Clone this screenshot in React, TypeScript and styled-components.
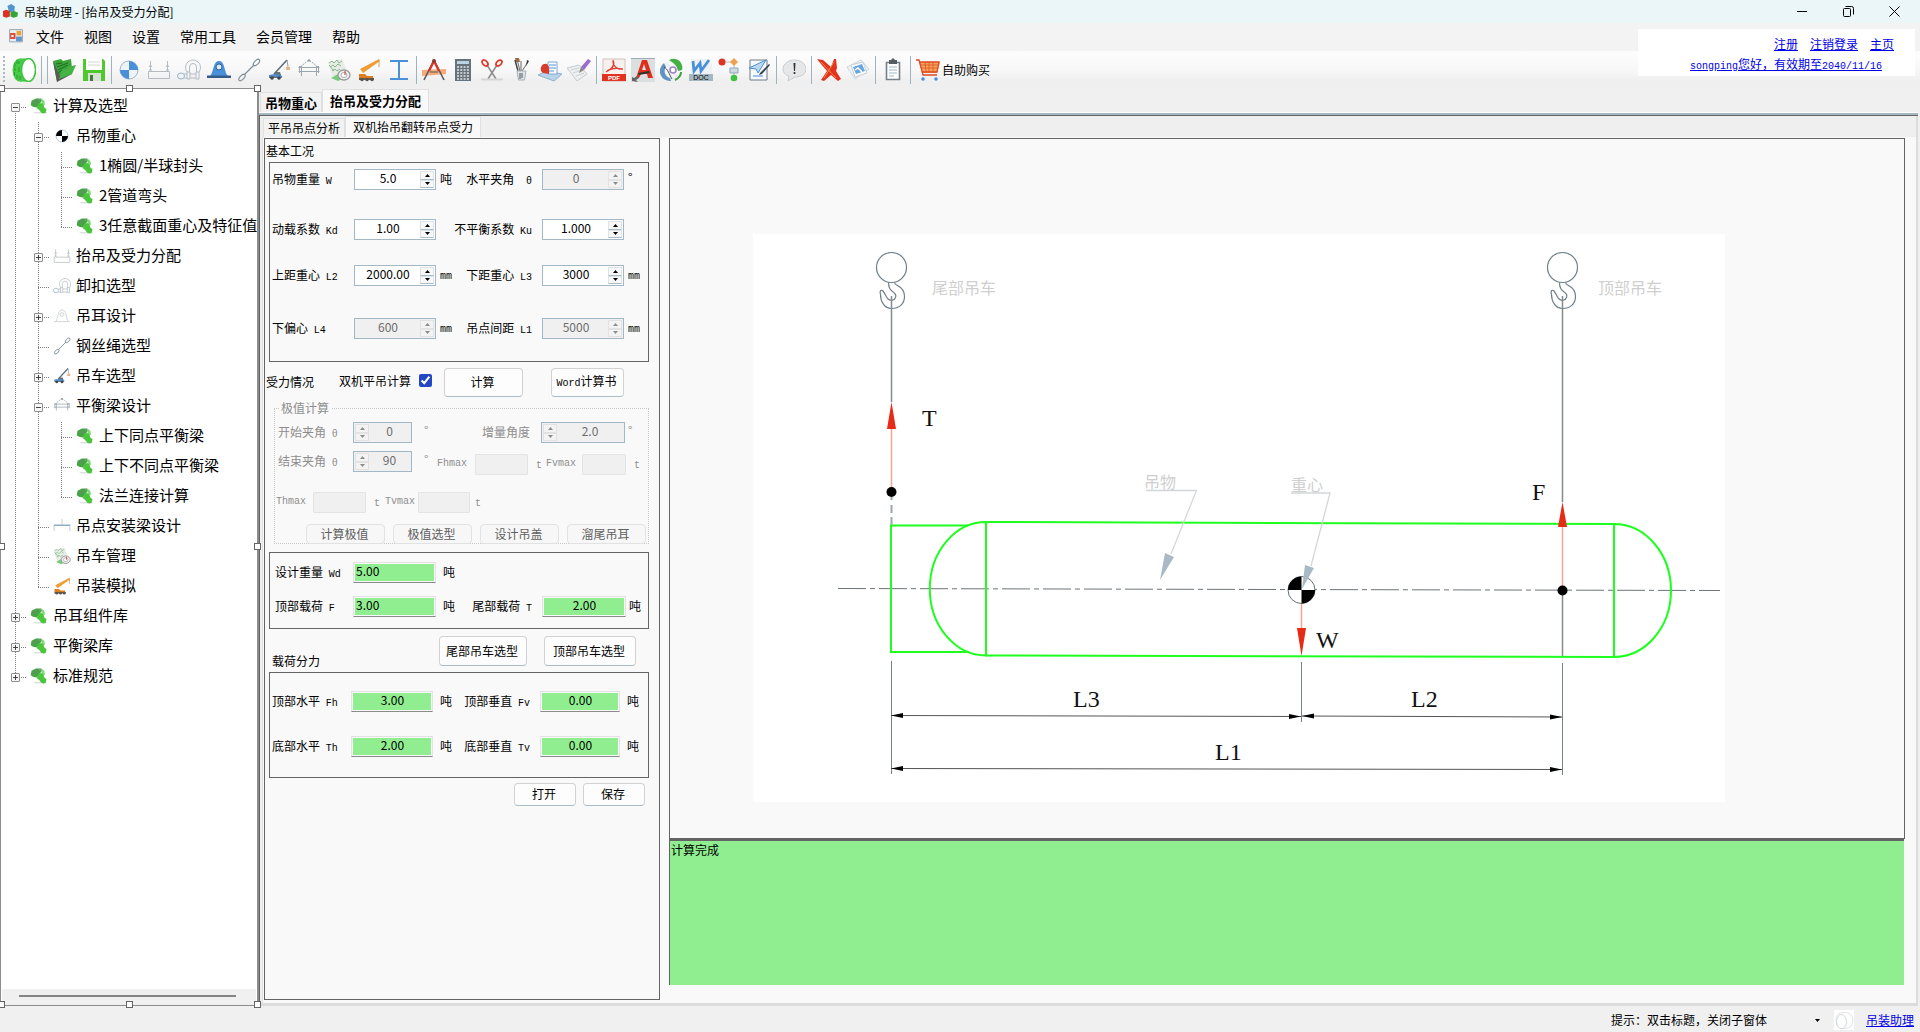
import React, { useState } from "react";
import styled, { createGlobalStyle, css } from "styled-components";

const cjk = `"Noto Sans CJK SC", sans-serif`;
const lineDark = "#646464";
const spinBorder = "#a3b8c6";
const pageBg = "#f9f9f9";
const green = "#90ee90";

const Global = createGlobalStyle`
  *, *::before, *::after { box-sizing: border-box; }
  body { margin: 0; background: #f0f0f0; color: #000; font: 12px/16px ${cjk}; }
  button, input { font: inherit; color: inherit; }
`;

/* ---------- window frame ---------- */

const Window = styled.div`
  display: flex;
  flex-direction: column;
  min-height: 100vh;
`;

const TitleBar = styled.header`
  display: flex;
  align-items: center;
  height: 23px;
  padding: 0 3px 0 3px;
  background: #ebf6f8;
`;

const TitleText = styled.h1`
  flex: 1;
  margin: 0 0 0 6px;
  font-size: 12px;
  font-weight: 400;
`;

const WindowButton = styled.button`
  display: grid;
  place-items: center;
  width: 46px;
  height: 20px;
  padding: 0;
  border: 0;
  background: none;
`;

const TopArea = styled.div`
  display: flex;
  justify-content: space-between;
  height: 65px;
  background: linear-gradient(#f3f3f3 0 28px, #fdfdfd 28px, #f8f8f8 46px, #efefef 58px);
`;

const Bars = styled.div`
  flex: 1;
  min-width: 0;
`;

const MenuBar = styled.nav`
  display: flex;
  align-items: center;
  height: 28px;
  padding: 0 0 2px 9px;
`;

const MenuItem = styled.button`
  height: 24px;
  padding: 0 10px;
  border: 0;
  background: none;
  font-size: 14px;
  line-height: 20px;

  &:first-of-type { margin-left: 3px; }
`;

const ToolBar = styled.div`
  display: flex;
  align-items: center;
  height: 37px;
  padding-left: 3px;
`;

const Grip = styled.span`
  width: 2px;
  height: 28px;
  margin-right: 6px;
  background: repeating-linear-gradient(#a9b9c2 0 2px, transparent 2px 4px);
`;

const ToolGroup = styled.div<{ $gap: number }>`
  display: flex;
  gap: ${(p) => p.$gap}px;
`;

const ToolButton = styled.button`
  display: flex;
  align-items: center;
  gap: 2px;
  min-width: 26px;
  height: 26px;
  padding: 0 1px;
  border: 0;
  background: none;
  white-space: nowrap;

  svg { flex: none; }
`;

const ToolSeparator = styled.span<{ $tight?: boolean }>`
  width: 1px;
  height: 28px;
  margin: ${(p) => (p.$tight ? "0 3px 0 1px" : "0 4px")};
  background: #9fb3bf;
`;

const UserBox = styled.div`
  width: 277px;
  height: 47px;
  margin: 6px 5px 0 0;
  padding: 7px 0 0;
  background: #fff;
`;

const UserLinks = styled.div<{ $inset: number }>`
  display: flex;
  justify-content: flex-end;
  gap: 12px;
  height: 20px;
  padding-right: ${(p) => p.$inset}px;
`;

const Link = styled.a`
  color: #0000e6;
  text-decoration: underline;
  white-space: nowrap;
`;

const Body = styled.div`
  display: grid;
  grid-template-columns: 259px minmax(0, 1fr);
  flex: 1;
`;

/* ---------- tree ---------- */

const TreePane = styled.aside`
  position: relative;
  display: flex;
  flex-direction: column;
  border: 1px solid #8c8c8c;
  border-right-width: 2px;
  background: #fff;
`;

const Tree = styled.ul`
  flex: 1;
  margin: 0;
  padding: 3px 0 0 3px;
  overflow: hidden;
  list-style: none;
`;

const TreeRow = styled.li`
  display: flex;
  align-items: center;
  height: 30px;
  white-space: nowrap;
`;

type Span = "none" | "full" | "top" | "bottom";

const Guide = styled.span<{ $span: Span; $branch?: boolean }>`
  display: grid;
  flex: none;
  place-items: center;
  width: 23px;
  height: 30px;
  background-repeat: no-repeat;
  background-image:
    repeating-linear-gradient(#808080 0 1px, transparent 1px 2px),
    repeating-linear-gradient(90deg, #808080 0 1px, transparent 1px 2px);
  background-size:
    ${(p) => (p.$span === "none" ? "0 0" : p.$span === "full" ? "1px 30px" : "1px 15px")},
    ${(p) => (p.$branch ? "12px 1px" : "0 0")};
  background-position: 11px ${(p) => (p.$span === "bottom" ? 15 : 0)}px, 11px 15px;
`;

const Expander = styled.button`
  width: 9px;
  height: 9px;
  padding: 0;
  border: 1px solid #8e8e8e;
  border-radius: 1px;
  background: #f6f6f6;

  svg { display: block; }
`;

const TreeIcon = styled.span`
  display: flex;
  flex: none;
  margin: 0 5px 2px 3px;
`;

const TreeLabel = styled.span`
  padding-bottom: 5px;
  font-size: 15px;
  line-height: 20px;
`;

const ScrollTrack = styled.div`
  height: 16px;
  margin: 0 1px;
  padding: 6px 20px 6px 17px;
  background: #f0f0f0;
`;

const ScrollThumb = styled.div`
  height: 2px;
  background: #858585;
`;

const Handle = styled.span<{ $x: string; $y: string }>`
  position: absolute;
  left: ${(p) => p.$x};
  top: ${(p) => p.$y};
  width: 7px;
  height: 7px;
  margin: -4px 0 0 -3px;
  border: 1px solid ${lineDark};
  background: #fff;
`;

/* ---------- tabs ---------- */

const Main = styled.main`
  display: flex;
  flex-direction: column;
  min-width: 0;
  padding-right: 2px;
`;

const MainTabs = styled.div`
  display: flex;
  align-items: flex-end;
  height: 24px;
  padding-left: 1px;
`;

const SubTabs = styled(MainTabs)`
  height: 21px;
  padding-left: 3px;
  background: #efefef;
`;

const tabBase = css<{ $active?: boolean }>`
  border: 1px solid #e0e0e0;
  border-bottom: 0;
  background: ${(p) => (p.$active ? pageBg : "#f2f2f2")};
  white-space: nowrap;
`;

const MainTab = styled.button<{ $active?: boolean }>`
  ${tabBase}
  height: ${(p) => (p.$active ? 23 : 20)}px;
  padding: 0 ${(p) => (p.$active ? 7 : 4)}px;
  font-size: 13px;
  font-weight: 700;
  line-height: 18px;
`;

const SubTab = styled.button<{ $active?: boolean }>`
  ${tabBase}
  height: ${(p) => (p.$active ? 21 : 19)}px;
  padding: 0 ${(p) => (p.$active ? 7 : 4)}px 1px;
`;

const TabRule = styled.div`
  height: 4px;
  border-top: 1px solid #fff;
  border-bottom: 1px solid ${lineDark};
  background: #a5b8c2;
`;

const TabFrame = styled.div`
  display: flex;
  flex: 1;
  flex-direction: column;
  border: solid #dcdcdc;
  border-width: 0 2px 3px 1px;
  border-left-color: ${lineDark};
`;

const Page = styled.div`
  display: flex;
  flex: 1;
  gap: 9px;
  margin-left: 2px;
  padding: 1px 11px 3px 1px;
  border-left: 1px solid #e0e0e0;
  background: ${pageBg};
`;

/* ---------- form ---------- */

const FormPanel = styled.form`
  flex: none;
  width: 396px;
  padding: 0 10px 0 4px;
  border: 1px solid ${lineDark};
`;

const SectionTitle = styled.h2`
  margin: 0 0 0 -3px;
  padding-top: 4px;
  height: 23px;
  font-size: 12px;
  font-weight: 400;
`;

const Group = styled.div<{ $height: number; $top?: number }>`
  height: ${(p) => p.$height}px;
  margin-top: ${(p) => p.$top ?? 0}px;
  border: 1px solid ${lineDark};
`;

const FieldGrid = styled.div<{ $cols: string; $rows: string; $pad: string }>`
  display: grid;
  grid-template-columns: ${(p) => p.$cols};
  grid-template-rows: ${(p) => p.$rows};
  align-items: start;
  padding: ${(p) => p.$pad};
`;

const FieldLabel = styled.label<{ $end?: boolean }>`
  display: flex;
  justify-content: ${(p) => (p.$end ? "flex-end" : "flex-start")};
  height: 21px;
  padding-right: ${(p) => (p.$end ? 10 : 0)}px;
  line-height: 20px;
  white-space: pre;
`;

const Mono = styled.span<{ $gap?: number }>`
  margin-left: ${(p) => p.$gap ?? 0}px;
  font-family: "Liberation Mono", monospace;
  font-size: 10px;
`;

const Unit = styled.span<{ $pad: number; $line: number }>`
  height: 21px;
  padding-left: ${(p) => p.$pad}px;
  line-height: ${(p) => p.$line}px;
`;

const SpinBox = styled.span<{ $off?: boolean; $left?: boolean }>`
  display: flex;
  flex-direction: ${(p) => (p.$left ? "row-reverse" : "row")};
  height: 21px;
  padding: 1px;
  border: 1px solid ${spinBorder};
  background: ${(p) => (p.$off ? "#f0f0f0" : "#fff")};
  color: ${(p) => (p.$off ? "#6d6d6d" : "#000")};
`;

const SpinInput = styled.input`
  flex: 1;
  width: 0;
  min-width: 0;
  height: 12px;
  padding: 0;
  border: 0;
  outline: 0;
  background: none;
  line-height: 12px;
  text-align: center;
`;

const SpinButtons = styled.span`
  display: flex;
  flex-direction: column;
  width: 14px;
`;

const SpinButton = styled.button`
  display: grid;
  flex: 1;
  place-items: center;
  padding: 0;
  border: 1px solid #dfe3e6;
  border-bottom-color: #a9bcc8;
  background: #f8f8f8;
  color: inherit;

  &:disabled { border-color: #e2e2e2; background: #f3f3f3; color: #8c8c8c; }
`;

const ResultInput = styled.input<{ $center?: boolean }>`
  width: 100%;
  height: 21px;
  padding: 0 1px 4px 2px;
  border: 1px solid #e2e2e2;
  border-bottom-color: #8a8a8a;
  outline: 0;
  background: ${green};
  box-shadow: inset 0 0 0 1px ${pageBg};
  text-align: ${(p) => (p.$center ? "center" : "left")};
`;

const BlankInput = styled.input`
  width: 100%;
  height: 21px;
  padding: 0 2px;
  border: 1px solid #e4e4e4;
  border-radius: 1px;
  background: #f0f0f0;
`;

const PushButton = styled.button<{ $width: number; $height: number }>`
  flex: none;
  width: ${(p) => p.$width}px;
  height: ${(p) => p.$height}px;
  padding: 0 2px 1px 0;
  border: 1px solid #d2d2d2;
  border-bottom-color: #a9bcc8;
  border-radius: 4px;
  background: #fdfdfd;
  white-space: nowrap;

  &:disabled { border-color: #e2e2e2; background: #f7f7f7; color: #5f5f5f; }
`;

const ForceRow = styled.div`
  display: flex;
  height: 36px;
  padding: 6px 0 0;
`;

const ForceTitle = styled.h2`
  width: 73px;
  margin: 6px 0 0 -3px;
  font-size: 12px;
  font-weight: 400;
`;

const CheckLabel = styled.label`
  display: flex;
  align-items: flex-start;
  gap: 8px;
  width: 105px;
  padding-top: 5px;
  white-space: nowrap;

  input { width: 13px; height: 13px; margin: 1px 0 0; accent-color: #2448c4; }
`;

const ForceButtons = styled.div`
  display: flex;
  gap: 28px;
`;

const Extremes = styled.fieldset`
  height: 144px;
  min-width: 0;
  margin: 2px 0 0 5px;
  padding: 6px 0 0 3px;
  border: 1px dotted #c8c8c8;
  color: #8e8e8e;
`;

const Legend = styled.legend`
  margin-left: 1px;
  padding: 0 2px;
`;

const Columns = styled.div<{ $cols: string; $top?: number; $shift?: number }>`
  display: grid;
  grid-template-columns: ${(p) => p.$cols};
  margin-top: ${(p) => p.$top ?? 0}px;
  margin-left: ${(p) => p.$shift ?? 0}px;
`;

const Lowered = styled(Columns)`
  margin-top: 3px;
`;

const ButtonRow = styled.div<{ $gap: number; $top: number; $inset?: number }>`
  display: flex;
  justify-content: flex-end;
  gap: ${(p) => p.$gap}px;
  margin-top: ${(p) => p.$top}px;
  padding-right: ${(p) => p.$inset ?? 0}px;
`;

const SplitTitle = styled.h2`
  flex: 1;
  align-self: flex-end;
  margin: 0 0 -3px 3px;
  font-size: 12px;
  font-weight: 400;
`;

/* ---------- drawing ---------- */

const Stage = styled.section`
  display: flex;
  flex: 1;
  flex-direction: column;
  min-width: 0;
`;

const Canvas = styled.div`
  flex: 1;
  padding: 95px 83px 30px;
  border: 1px solid ${lineDark};

  svg { display: block; max-width: 100%; height: auto; background: #fff; }
`;

const Message = styled.output`
  display: block;
  height: 146px;
  margin: 0 1px 15px 0;
  padding: 1px;
  border: solid ${lineDark};
  border-width: 2px 0 0 1px;
  background: ${green};
`;

const StatusBar = styled.footer`
  display: flex;
  align-items: center;
  justify-content: flex-end;
  height: 26px;
  padding: 1px 6px 0 0;

  button { margin: 0 10px 0 44px; padding: 4px; border: 0; background: none; line-height: 0; }
  > svg { margin-right: 12px; }
`;

/* ---------- icons ---------- */

const blue = "#4a90d9";

const glyphs: Record<string, React.ReactNode> = {
  ring: (
    <>
      <path d="M8 .5h8v23H8z" fill="#3ec43e" />
      <ellipse cx="8" cy="12" rx="7.5" ry="11.5" fill="#46cc46" />
      <path d="M5 2v4M3 5v4M7 3v3M2.500 14v4M5 17v4M3 10v3M8 18v4M7 9v5" stroke="#2a9a2a" />
      <ellipse cx="16.500" cy="12" rx="7" ry="11.500" fill="#fff" stroke="#3ec43e" strokeWidth="1.600" />
    </>
  ),
  open: (
    <>
      <path d="M1 3l8-2 2 2 8-2 1 9-9 8-6 6z" fill="#3aa33a" />
      <path d="M1 3l4 21 15-8-1-3-11 5z" fill="#5a5a5a" />
      <path d="M7 21l3-9 5-1 1-2 8-2-4 9z" fill="#43b443" />
      <path d="M4 6l6-1M5 9l11-4M6 12l10-5M6 15l4-3" stroke="#1d6f1d" />
    </>
  ),
  save: (
    <>
      <path d="M1 1h20l2 2v20H1z" fill="#4fc82d" />
      <path d="M4 1h16v11H4z" fill="#fff" />
      <path d="M6 4h12M6 7h12" stroke="#d4d4d4" />
      <path d="M6 15h13v8H6z" fill="#d8ded8" />
      <path d="M8 17h3v6H8z" fill="#3d7a35" />
    </>
  ),
  gravity: (
    <>
      <circle cx="12" cy="12" r="9" fill="#eef3f8" stroke="#9bb5cc" />
      <path d="M12 12V3a9 9 0 0 1 9 9zM12 12v9a9 9 0 0 1-9-9z" fill={blue} />
    </>
  ),
  gravityBlack: (
    <>
      <circle cx="12" cy="12" r="8" fill="#fff" stroke="#9bb5cc" />
      <path d="M12 12V4a8 8 0 0 0-8 8zM12 12v8a8 8 0 0 0 8-8z" fill="#000" />
    </>
  ),
  lift: (
    <path d="M1.500 13.500h21v7h-21zM3.500 3v10M20.500 3v10M2 9l1.500-2L5 9M19 9l1.500-2L22 9M2 12h3M19 12h3" fill="none" stroke="#b4bcc1" />
  ),
  shackle: (
    <g fill="none" stroke="#b4bdc4">
      <path d="M10 14a7.500 7.500 0 1 1 12 0M12.500 14V9a3.500 3.500 0 0 1 7 0v5" />
      <path d="M10 14h3v7h-3zM19 14h3v7h-3z" />
      <ellipse cx="4" cy="18" rx="3.500" ry="3" stroke="#92b4d2" />
      <path d="M7 16h3M7 20h3M13 16h6M13 20h6" />
    </g>
  ),
  lug: (
    <>
      <path d="M3 18C7 14 6 3 12 3s5 11 9 15z" fill={blue} />
      <circle cx="12" cy="9" r="3" fill="#dcebf8" stroke="#2c62a0" />
      <path d="M0 17.500h24V20H0z" fill="#355c88" />
    </>
  ),
  lugPale: (
    <g fill="none" stroke="#c4cacd">
      <path d="M4 19C7 14 6 5 12 4s5 10 8 15M1 19.500h22" />
      <circle cx="12" cy="10" r="2.500" />
    </g>
  ),
  rope: (
    <g fill="none" stroke="#7e8e99" strokeWidth="1.200">
      <path d="M7 17L17 7" />
      <ellipse cx="5" cy="19.500" rx="2" ry="4" transform="rotate(45 5 19.500)" />
      <ellipse cx="19.500" cy="4.500" rx="2" ry="4" transform="rotate(45 19.500 4.500)" />
    </g>
  ),
  crane: (
    <>
      <path d="M2 17h5l2-3h4l2 6H2z" fill="#66747f" />
      <path d="M2 18l6-1 7 2" stroke={blue} strokeWidth="2" fill="none" />
      <circle cx="5" cy="20" r="1.800" fill="#444" />
      <circle cx="12" cy="20" r="1.800" fill="#444" />
      <path d="M7 16L20 2" stroke="#5c6a75" strokeWidth="1.500" />
      <path d="M20 2l1 7" stroke="#888" strokeWidth=".8" />
      <path d="M19 9h4v3h-4z" fill="#e3b78b" />
    </>
  ),
  beam: (
    <g fill="none" stroke="#9aa6ae">
      <path d="M3 9l9-7 9 7" strokeDasharray="2 1" />
      <path d="M1.500 9.500h21M1.500 13.500h21M4.500 8v10M19.500 8v10M2.500 8v7M21.500 8v7" />
      <circle cx="12" cy="2.500" r=".8" fill="#333" />
    </g>
  ),
  manage: (
    <>
      <path d="M1 4l14-3 5 12-10 8-5-3z" fill="#e6ede6" />
      <path d="M2 5l3-2 2 2 3-3 2 3 3-2M3 9l3-2 2 2 3-3 3 2M5 13l3-2 2 2 3-2M2 7l5 6" stroke="#7fb27f" fill="none" strokeWidth=".9" />
      <path d="M4 20l7-4 4 5-4 2z" fill="#7cc97c" />
      <ellipse cx="17" cy="17" rx="6" ry="5" fill="#f0f0f0" stroke="#9b9b9b" strokeWidth="1.300" />
      <ellipse cx="17" cy="17" rx="3" ry="2.500" fill="#fff" stroke="#9b9b9b" strokeWidth=".8" />
      <path d="M18 13v4" stroke="#c0392b" fill="none" />
    </>
  ),
  craneOrange: (
    <>
      <path d="M3 11l3 4L23 3l-1-2z" fill="#ef9d35" />
      <path d="M2 16h6l2 2h6v3H2z" fill="#e07f20" />
      <path d="M2 20h15v2H2z" fill="#7a5b38" />
      <circle cx="5" cy="21.500" r="1.800" fill="#555" />
      <circle cx="10" cy="21.500" r="1.800" fill="#555" />
      <circle cx="15" cy="21.500" r="1.800" fill="#555" />
      <path d="M22 3v6" stroke="#caa06c" />
    </>
  ),
  ibeam: <path d="M3 3h18M3 21h18M12 3v18" stroke={blue} strokeWidth="2" />,
  ibeamPale: (
    <g fill="none" stroke="#b3bdc3">
      <path d="M1 11h22" stroke="#8dacc4" strokeWidth="2" />
      <path d="M12 3v8M1.500 11v8M22.500 11v8" />
    </g>
  ),
  compass: (
    <>
      <path d="M0 12l24-1v5L0 18z" fill="#f3ab7e" />
      <path d="M12 2L2 22M12 2l10 20" stroke="#5a5a5a" strokeWidth="1.600" />
      <path d="M12 3L7 13M12 3l5 10" stroke="#d93522" strokeWidth="2.200" />
      <circle cx="12" cy="3" r="2" fill="#8a3b2f" />
      <path d="M8 14h8" stroke="#5a5a5a" />
    </>
  ),
  calculator: (
    <>
      <path d="M4 1h16v22H4z" fill="#66737c" />
      <path d="M6 3h12v3H6z" fill="#b9d3e0" />
      <path d="M6 9h12M6 12h12M6 15h12M6 18h12M6 21h12" stroke="#e6e6e6" strokeWidth="1.600" strokeDasharray="2 1.300" />
    </>
  ),
  scissors: (
    <>
      <path d="M7 7l9 14M17 7L8 21" stroke="#8c8c8c" strokeWidth="1.500" />
      <g fill="none" stroke="#e03a2a" strokeWidth="1.800">
        <ellipse cx="5" cy="5" rx="2.200" ry="3.500" transform="rotate(-45 5 5)" />
        <ellipse cx="19" cy="5" rx="2.200" ry="3.500" transform="rotate(45 19 5)" />
      </g>
      <path d="M1 21.500h22" stroke="#d5d5d5" strokeWidth="2" />
    </>
  ),
  brushes: (
    <>
      <path d="M8 1l3 12M12 3v10M19 4l-6 9" stroke="#666" />
      <path d="M6 0h4l1 4H7z" fill="#9c6b42" />
      <path d="M18 2l2 1-3 5z" fill="#333" />
      <path d="M6 2l3 11" stroke="#444" strokeWidth="1.500" />
      <path d="M8 13h9l-1.500 9h-6z" fill="#dce4e9" stroke="#a5b1b8" />
      <path d="M11 15v6M13 15v5" stroke="#555" />
    </>
  ),
  scan: (
    <>
      <path d="M0 17l9-4 15 3-8 7z" fill="#b7d4ec" stroke="#8fb0cb" />
      <path d="M10 4h9v12h-9z" fill="#fff" stroke="#7aa7d0" />
      <path d="M11 7h7M11 10h7M11 13h5" stroke={blue} />
      <path d="M9 6a5 5 0 0 0-4 9l6 1V9z" fill="#da3a2a" />
    </>
  ),
  pencil: (
    <>
      <path d="M0 10l12-3 8 9-10 7z" fill="#eceeef" stroke="#c6cccf" />
      <path d="M4 12l8-2M6 15l9-3M9 18l8-3" stroke="#cdd2d5" />
      <path d="M14 9l7-8 3 2-7 9z" fill="#9a6cd0" />
      <path d="M14 9l3 3-5 3z" fill="#888" />
    </>
  ),
  pdf: (
    <>
      <path d="M1 1h22v22H1z" fill="#f6f0ee" stroke="#d2c2bd" />
      <path d="M11 2c2 4 1 8-7 12M11 3c0 6 5 9 10 8M5 13c4-3 10-3 15-2" stroke="#df3f2e" fill="none" strokeWidth="1.300" />
      <path d="M0 16h24v7H0z" fill="#e1331f" />
      <text x="12" y="22" fontSize="6" textAnchor="middle" fill="#fff" fontFamily="Liberation Sans, sans-serif" fontWeight="700">PDF</text>
    </>
  ),
  cad: (
    <>
      <path d="M0 0h24v24H0z" fill="#dcdfe0" />
      <path d="M0 .5h24" stroke="#9aacb6" />
      <path fillRule="evenodd" d="M5 20L11 2h5l6 18h-5l-1-4h-6l-2 4zM11 12h4l-2-6z" fill="#df2f1c" />
      <path d="M7 15l11-2 1 2-11 2z" fill="#333" />
      <path d="M1 23v-4l2 1 3-2 2 2-3 2 2 2z" fill="#666" />
    </>
  ),
  globe: (
    <>
      <path d="M4 5a10 10 0 0 0 7 18l-1-3a7 7 0 0 1-4-11z" fill="#5e93c4" />
      <path d="M9 2c8-4 15 3 13 10l-4 1c-1-5-4-8-9-11z" fill="#42b042" />
      <path d="M6 5l12 14" stroke="#e9eef2" strokeWidth="2.500" />
      <circle cx="13" cy="12" r="3" fill="#fff" stroke="#9b83c9" strokeWidth="1.600" />
      <path d="M4 9c4 2 5 7 8 12" stroke="#444f58" fill="none" />
      <path d="M15 22c4-2 6-4 6-8" stroke="#42a042" strokeWidth="2" fill="none" />
    </>
  ),
  word: (
    <>
      <path d="M2 1h16l5 5v12H2z" fill="#eef2f4" />
      <path d="M4 3l1 10 6-8 1 8 8-11" stroke={blue} strokeWidth="2.800" fill="none" />
      <path d="M0 16h24v7H0z" fill="#a5b8c2" />
      <text x="12" y="22" fontSize="7" textAnchor="middle" fill="#000" fontFamily="Liberation Sans, sans-serif">DOC</text>
    </>
  ),
  flow: (
    <>
      <path d="M4 4h12v16" stroke="#bbb" fill="none" />
      <circle cx="4" cy="4" r="3.500" fill="#dd3322" />
      <path d="M16 0l4 4-4 4-4-4z" fill="#f0a050" />
      <path d="M12 10h8v5h-8z" fill="#cfdbe4" stroke="#8fa7b8" />
      <circle cx="16" cy="20" r="3.300" fill="#3fc23f" />
    </>
  ),
  note: (
    <>
      <path d="M3 2h17v20H3z" fill="#f7fafc" stroke="#6c7d88" />
      <path d="M2 10l17-8-8 13-2-4z" fill="#bcd7ee" stroke={blue} />
      <path d="M6 18h10" stroke={blue} />
      <path d="M13 15l9-9 1 1-8 9-3 1z" fill="#34434f" />
    </>
  ),
  bubble: (
    <>
      <path d="M12.500 2C19 2 24 6 24 11s-5 8-11 8l-7 4 1-5C3 17 1 14 1 11c0-5 5-9 11.500-9z" fill="#e6e7e8" stroke="#c9ccce" />
      <path d="M11.500 5h2l-.5 8h-1z" fill="#333" />
      <circle cx="12.500" cy="15" r="1.100" fill="#333" />
    </>
  ),
  remove: (
    <>
      <path d="M0 1l6 1 8 7 3-8 2 0 1 9-1 3 5 8-3 2-7-6-7 6-3-1 6-9-6-7z" fill="#e3331e" />
      <path d="M4 4l15 16M17 4L7 20" stroke="#f0883f" />
    </>
  ),
  cards: (
    <>
      <path d="M1 9l14-7 8 9-14 10z" fill="#eef3f6" stroke="#cfd7dc" />
      <path d="M5 7l12-3 4 11-12 4z" fill="#fff" stroke="#c4cfd6" />
      <path d="M7 9l9-3 3 7-9 3z" fill="#6aa5dd" />
      <path d="M9 12l3-2 4 4" stroke="#fff" fill="none" strokeWidth="1.500" />
    </>
  ),
  clipboard: (
    <>
      <path d="M5.500 4.500h13v17h-13z" fill="#fff" stroke="#73808a" strokeWidth="1.600" />
      <path d="M8 2h2l2-2 2 2h2v4H8z" fill="#545d63" />
      <path d="M8 9h8M8 12h8M8 15h8M8 18h5" stroke="#9db8cc" />
    </>
  ),
  cart: (
    <>
      <path d="M3 4h21l-3 11H6z" fill="#f3a455" />
      <path d="M5 7h18M5 10h17M9 4l1 10M13 4v10M17 4v10" stroke="#e2542b" strokeWidth=".8" />
      <path d="M0 2h3l4 15h14M6 14h15l2-10H4" stroke="#dd4a2a" fill="none" strokeWidth="1.300" />
      <circle cx="7" cy="21" r="1.800" fill={blue} />
      <circle cx="20" cy="21" r="1.800" fill={blue} />
    </>
  ),
  puzzle: (
    <>
      <path d="M4 20h18v2H7z" fill="#dde1e4" />
      <path d="M2 5l6-3 7 0 1 3-4 5-3 4-5-1-3-2z" fill="#45a445" />
      <path d="M15 2l4 3 1 5-4 2z" fill="#7bdc74" />
      <path d="M11 9l4-1 3 2 1 4 3 2-1 5-3 1-3-1-3-4-3-2z" fill="#4bc63c" />
      <circle cx="6" cy="7" r="1.500" fill="#7b7f7b" />
      <circle cx="13" cy="4" r="1.300" fill="#8f8f94" />
    </>
  ),
  toggle: (
    <>
      <path d="M0 0h24v24H0z" fill="#fff" />
      <rect x="2.500" y="3" width="20" height="19" rx="8" fill="#fdfdfd" stroke="#dcdfe1" />
      <ellipse cx="9" cy="14" rx="6" ry="8.500" fill="#fff" stroke="#c5d0d6" />
    </>
  ),
  app: (
    <>
      <path d="M7 3l6-3 6 4-1 8-8 1z" fill="#4f95cf" />
      <path d="M0 11l5-2 6 2v9l-6 2-5-2z" fill="#dd3222" />
      <path d="M12 13l6-2 6 3-1 6-6 2-5-2z" fill="#35a535" />
    </>
  ),
  child: (
    <>
      <path d="M1 1h22v21H1z" fill="#e8edf1" stroke="#8ea2b0" strokeWidth="1.600" />
      <path d="M2 7h9v10H2z" fill="#dc3a22" />
      <path d="M13 3h8v8h-8z" fill="#f0a23a" />
      <path d="M12 13h10v8H12z" fill="#5f97cc" />
      <path d="M4 10h4v4H4z" fill="#fff" />
    </>
  ),
};

const Icon = ({ name, size = 24 }: { name: string; size?: number }) => (
  <svg width={size} height={size} viewBox="0 0 24 24" aria-hidden="true">
    {glyphs[name]}
  </svg>
);

/* ---------- data ---------- */

const menus = ["文件", "视图", "设置", "常用工具", "会员管理", "帮助"];

const tools: { gap: number; tight?: boolean; items: [string, string][] }[] = [
  { gap: 3, items: [["ring", "启动"]] },
  { gap: 3, items: [] },
  { gap: 4, tight: true, items: [["open", "打开"], ["save", "保存"]] },
  {
    gap: 4,
    items: [
      ["gravity", "吊物重心"], ["lift", "抬吊及受力分配"], ["shackle", "卸扣选型"], ["lug", "吊耳设计"],
      ["rope", "钢丝绳选型"], ["crane", "吊车选型"], ["beam", "平衡梁设计"], ["manage", "吊车管理"],
      ["craneOrange", "吊装模拟"], ["ibeam", "型钢"],
    ],
  },
  {
    gap: 3,
    items: [
      ["compass", "测量"], ["calculator", "计算器"], ["scissors", "截图"], ["brushes", "画图"],
      ["scan", "扫描"], ["pencil", "记事"],
    ],
  },
  {
    gap: 3,
    items: [["pdf", "PDF"], ["cad", "CAD"], ["globe", "浏览"], ["word", "Word"], ["flow", "流程"], ["note", "编辑"]],
  },
  { gap: 3, items: [["bubble", "消息"]] },
  { gap: 3, items: [["remove", "删除"], ["cards", "图片"]] },
  { gap: 3, items: [["clipboard", "剪贴板"]] },
];

type Node = { level: number; text: string; icon: string; open?: boolean; guides: Span[] };

const tree: Node[] = [
  { level: 0, text: "计算及选型", icon: "puzzle", open: true, guides: ["bottom"] },
  { level: 1, text: "吊物重心", icon: "gravityBlack", open: true, guides: ["full", "full"] },
  { level: 2, text: "1椭圆/半球封头", icon: "puzzle", guides: ["full", "full", "full"] },
  { level: 2, text: "2管道弯头", icon: "puzzle", guides: ["full", "full", "full"] },
  { level: 2, text: "3任意截面重心及特征值", icon: "puzzle", guides: ["full", "full", "top"] },
  { level: 1, text: "抬吊及受力分配", icon: "lift", open: false, guides: ["full", "full"] },
  { level: 1, text: "卸扣选型", icon: "shackle", guides: ["full", "full"] },
  { level: 1, text: "吊耳设计", icon: "lugPale", open: false, guides: ["full", "full"] },
  { level: 1, text: "钢丝绳选型", icon: "rope", guides: ["full", "full"] },
  { level: 1, text: "吊车选型", icon: "crane", open: false, guides: ["full", "full"] },
  { level: 1, text: "平衡梁设计", icon: "beam", open: true, guides: ["full", "full"] },
  { level: 2, text: "上下同点平衡梁", icon: "puzzle", guides: ["full", "full", "full"] },
  { level: 2, text: "上下不同点平衡梁", icon: "puzzle", guides: ["full", "full", "full"] },
  { level: 2, text: "法兰连接计算", icon: "puzzle", guides: ["full", "full", "top"] },
  { level: 1, text: "吊点安装梁设计", icon: "ibeamPale", guides: ["full", "full"] },
  { level: 1, text: "吊车管理", icon: "manage", guides: ["full", "full"] },
  { level: 1, text: "吊装模拟", icon: "craneOrange", guides: ["full", "top"] },
  { level: 0, text: "吊耳组件库", icon: "puzzle", open: false, guides: ["full"] },
  { level: 0, text: "平衡梁库", icon: "puzzle", open: false, guides: ["full"] },
  { level: 0, text: "标准规范", icon: "puzzle", open: false, guides: ["top"] },
];

/* ---------- form parts ---------- */

const Arrow = ({ down }: { down?: boolean }) => (
  <svg width="5" height="3" viewBox="0 0 5 3" aria-hidden="true">
    <path d={down ? "M0 0h5L2.500 3z" : "M0 3h5L2.500 0z"} fill="currentColor" />
  </svg>
);

const Spinner = ({ id, value, off, left }: { id: string; value: string; off?: boolean; left?: boolean }) => {
  const [text, setText] = useState(value);
  const digits = value.split(".")[1]?.length ?? 0;
  const step = (by: number) => setText((t) => (Number(t) + by).toFixed(digits));
  return (
    <SpinBox $off={off} $left={left}>
      <SpinInput id={id} value={text} disabled={off} onChange={(e) => setText(e.target.value)} />
      <SpinButtons>
        <SpinButton type="button" aria-label="增加" disabled={off} onClick={() => step(1)}><Arrow /></SpinButton>
        <SpinButton type="button" aria-label="减少" disabled={off} onClick={() => step(-1)}><Arrow down /></SpinButton>
      </SpinButtons>
    </SpinBox>
  );
};

const UnitText = ({ unit, pad }: { unit: string; pad: number }) => {
  const latin = unit === "mm" || unit === "t";
  return (
    <Unit $pad={pad} $line={unit === "°" ? 16 : latin ? 18 : 20}>
      {latin ? <Mono>{unit}</Mono> : unit}
    </Unit>
  );
};

type FieldProps = {
  id: string; name: string; code: string; value: string; unit: string;
  off?: boolean; end?: boolean; pad?: number;
};

const Caption = ({ id, name, code, end }: { id: string; name: string; code: string; end?: boolean }) => (
  <FieldLabel htmlFor={id} $end={end}>
    <span>{name} <Mono $gap={3}>{code}</Mono></span>
  </FieldLabel>
);

const SpinField = ({ id, name, code, value, unit, off, end, pad = 4 }: FieldProps) => (
  <>
    <Caption id={id} name={name} code={code} end={end} />
    <Spinner id={id} value={value} off={off} />
    <UnitText unit={unit} pad={pad} />
  </>
);

const ResultField = ({ id, name, code, value, unit, end, pad = 7, center }: FieldProps & { center?: boolean }) => (
  <>
    <Caption id={id} name={name} code={code} end={end} />
    <ResultInput id={id} defaultValue={value} readOnly $center={center} />
    <UnitText unit={unit} pad={pad} />
  </>
);

const MaxField = ({ id, pad = 8 }: { id: string; pad?: number }) => (
  <>
    <FieldLabel htmlFor={id}><Mono>{id}</Mono></FieldLabel>
    <BlankInput id={id} disabled />
    <UnitText unit="t" pad={pad} />
  </>
);

/* ---------- lifting diagram ---------- */

const Hook = ({ x }: { x: number }) => (
  <g transform={`translate(${x} 0)`} fill="none" stroke="#6f7e88" strokeWidth="1.200">
    <circle cx="0" cy="267.500" r="15" />
    <path d="M-3 282.500c0 5 1 7 4 9c3 2 4 4 3 6c-1 3-5 4-8 1c-2-3-3-6-5-8c-2-1-3 1-2 4c0 7 4 14 11 14c8 0 13-5 13-12c0-6-3-9-7-11c-2-1-3-2-3-3" />
  </g>
);

const Dim = ({ x1, x2, y }: { x1: number; x2: number; y: number }) => (
  <g>
    <path d={`M${x1} ${y}L${x2} ${y + 1}`} stroke="#555" />
    <path d={`M${x1} ${y}l12-2.500v5zM${x2} ${y + 1}l-12-2.500v5z`} fill="#000" />
  </g>
);

const Diagram = () => (
  <svg width="972" height="568" viewBox="753 234 972 568" role="img" aria-label="双机抬吊受力图">
    <Hook x={891.5} />
    <Hook x={1562.5} />
    <path d="M891.500 296v106M1562.500 296v206M1562.500 590v67" stroke="#828a8f" strokeWidth="1.500" />
    <path d="M891.500 429v60M1562.500 527v60M1301.500 604v25" stroke="#f3a696" strokeWidth="1.500" />
    <path d="M891.500 497v28" stroke="#9aa8b0" strokeWidth="2" strokeDasharray="3 5 8 4 8" />
    <path d="M838 588.500L1720 590.500" stroke="#6d7478" strokeDasharray="28 4 5 4" />
    <g fill="none" stroke="#1fff1f" strokeWidth="2">
      <path d="M968 525.500H891V652h78" />
      <path d="M986 522a56 66.500 0 0 0 0 133.500z" />
      <path d="M986 522L1614 524M986 655.500L1614 657" />
      <path d="M1614 524a57 66.500 0 0 1 0 133z" />
    </g>
    <path d="M891.500 402l-4.500 27h9zM1562.500 502l-4.500 25h9zM1301.500 656l-4.500-28h9z" fill="#e62b16" />
    <circle cx="891.500" cy="492" r="5" />
    <circle cx="1562.500" cy="590.500" r="5" />
    <circle cx="1301.500" cy="590" r="13.500" fill="#fff" stroke="#63717a" />
    <path d="M1301.500 590v-13.500a13.500 13.500 0 0 0-13.500 13.500zM1301.500 590v13.500a13.500 13.500 0 0 0 13.500-13.500z" />
    <path d="M1146 490.500h50.500L1171 554M1291 493h39L1311 566" fill="none" stroke="#d4d7d9" strokeWidth="1.300" />
    <path d="M1160 580l5-27 9 4zM1302 589l3-24 9 3z" fill="#a9bac6" />
    <path d="M891.500 661v113M1301.500 662v60M1562.500 663v112" stroke="#75818a" />
    <Dim x1={891} x2={1301} y={715.5} />
    <Dim x1={1302} x2={1562} y={716} />
    <Dim x1={891} x2={1562} y={768.5} />
    <g fontFamily="Liberation Serif, serif" fontSize="24" fill="#111">
      <text x="922" y="426">T</text>
      <text x="1532" y="500">F</text>
      <text x="1316" y="648">W</text>
      <text x="1073" y="707">L3</text>
      <text x="1411" y="707">L2</text>
      <text x="1215" y="760">L1</text>
    </g>
    <g fontFamily="Noto Sans CJK SC, sans-serif" fontSize="16" fill="#cfcfcf">
      <text x="932" y="294">尾部吊车</text>
      <text x="1598" y="294">顶部吊车</text>
      <text x="1144" y="488">吊物</text>
      <text x="1291" y="491">重心</text>
    </g>
  </svg>
);

/* ---------- page ---------- */

const handlePoints = [
  ["0px", "0px"], ["50%", "0px"], ["100%", "0px"],
  ["0px", "50%"], ["100%", "50%"],
  ["0px", "100%"], ["50%", "100%"], ["100%", "100%"],
];

export default function App() {
  const [both, setBoth] = useState(true);
  return (
    <Window>
      <Global />
      <TitleBar>
        <Icon name="app" size={15} />
        <TitleText>吊装助理 - [抬吊及受力分配]</TitleText>
        <WindowButton aria-label="最小化">
          <svg width="11" height="11"><path d="M0 5.500h10" stroke="#000" /></svg>
        </WindowButton>
        <WindowButton aria-label="还原">
          <svg width="11" height="11" fill="none" stroke="#000">
            <rect x=".5" y="2.500" width="7" height="8" rx="1" />
            <path d="M2.500.5h6a2 2 0 0 1 2 2v6" />
          </svg>
        </WindowButton>
        <WindowButton aria-label="关闭">
          <svg width="11" height="11"><path d="M.5.5l10 10M10.500.5l-10 10" stroke="#000" /></svg>
        </WindowButton>
      </TitleBar>

      <TopArea>
        <Bars>
          <MenuBar>
            <Icon name="child" size={14} />
            {menus.map((m) => <MenuItem key={m}>{m}</MenuItem>)}
          </MenuBar>
          <ToolBar>
            <Grip />
            {tools.map((group, i) => (
              <React.Fragment key={i}>
                {i > 0 && <ToolSeparator $tight={group.tight} />}
                <ToolGroup $gap={group.gap}>
                  {group.items.map(([icon, name]) => (
                    <ToolButton key={icon} aria-label={name}><Icon name={icon} /></ToolButton>
                  ))}
                </ToolGroup>
              </React.Fragment>
            ))}
            <ToolSeparator />
            <ToolButton><Icon name="cart" />自助购买</ToolButton>
          </ToolBar>
        </Bars>
        <UserBox>
          <UserLinks $inset={21}>
            <Link href="#register">注册</Link>
            <Link href="#logout">注销登录</Link>
            <Link href="#home">主页</Link>
          </UserLinks>
          <UserLinks $inset={33}>
            <Link href="#account"><Mono>songping</Mono>您好，有效期至<Mono>2040/11/16</Mono></Link>
          </UserLinks>
        </UserBox>
      </TopArea>

      <Body>
        <TreePane>
          <Tree>
            {tree.map((n) => (
              <TreeRow key={n.text}>
                {n.guides.map((span, i) => (
                  <Guide key={i} $span={span} $branch={i === n.level}>
                    {i === n.level && n.open !== undefined && (
                      <Expander aria-label={n.open ? "折叠" : "展开"}>
                        <svg width="7" height="7">
                          <path d={n.open ? "M1 3.500h5" : "M1 3.500h5M3.500 1v5"} stroke="#444" />
                        </svg>
                      </Expander>
                    )}
                  </Guide>
                ))}
                <TreeIcon><Icon name={n.icon} size={18} /></TreeIcon>
                <TreeLabel>{n.text}</TreeLabel>
              </TreeRow>
            ))}
          </Tree>
          <ScrollTrack><ScrollThumb /></ScrollTrack>
          {handlePoints.map(([x, y]) => <Handle key={x + y} $x={x} $y={y} />)}
        </TreePane>

        <Main>
          <MainTabs>
            <MainTab>吊物重心</MainTab>
            <MainTab $active>抬吊及受力分配</MainTab>
          </MainTabs>
          <TabRule />
          <TabFrame>
            <SubTabs>
              <SubTab>平吊吊点分析</SubTab>
              <SubTab $active>双机抬吊翻转吊点受力</SubTab>
            </SubTabs>
            <Page>
              <FormPanel onSubmit={(e) => e.preventDefault()}>
                <SectionTitle>基本工况</SectionTitle>
                <Group $height={200}>
                  <FieldGrid $cols="82px 82px 31px 75px 82px 25px" $rows="50px 46px 53px 21px" $pad="6px 0 0 2px">
                    <SpinField id="w" name="吊物重量" code="W" value="5.0" unit="吨" />
                    <SpinField id="theta" name="水平夹角" code={"\u00a0θ"} value="0" unit="°" off end />
                    <SpinField id="kd" name="动载系数" code="Kd" value="1.00" unit="" />
                    <SpinField id="ku" name="不平衡系数" code="Ku" value="1.000" unit="" end />
                    <SpinField id="l2" name="上距重心" code="L2" value="2000.00" unit="mm" />
                    <SpinField id="l3" name="下距重心" code="L3" value="3000" unit="mm" end />
                    <SpinField id="l4" name="下偏心" code="L4" value="600" unit="mm" off />
                    <SpinField id="l1" name="吊点间距" code="L1" value="5000" unit="mm" off end />
                  </FieldGrid>
                </Group>

                <ForceRow>
                  <ForceTitle>受力情况</ForceTitle>
                  <CheckLabel>
                    双机平吊计算
                    <input type="checkbox" checked={both} onChange={(e) => setBoth(e.target.checked)} />
                  </CheckLabel>
                  <ForceButtons>
                    <PushButton type="submit" $width={79} $height={29}>计算</PushButton>
                    <PushButton type="button" $width={73} $height={29}><Mono>Word</Mono>计算书</PushButton>
                  </ForceButtons>
                </ForceRow>

                <Extremes>
                  <Legend>极值计算</Legend>
                  <Columns $cols="75px 59px 70px 59px 84px 1fr">
                    <Caption id="from" name="开始夹角" code="θ" />
                    <Spinner id="from" value="0" off left />
                    <UnitText unit="°" pad={12} />
                    <FieldLabel htmlFor="inc">增量角度</FieldLabel>
                    <Spinner id="inc" value="2.0" off left />
                    <UnitText unit="°" pad={3} />
                  </Columns>
                  <Columns $cols="75px 59px 25px 1fr" $top={8}>
                    <Caption id="to" name="结束夹角" code="θ" />
                    <Spinner id="to" value="90" off left />
                    <UnitText unit="°" pad={12} />
                    <Lowered $cols="38px 53px 18px 36px 44px 1fr">
                      <MaxField id="Fhmax" />
                      <MaxField id="Fvmax" />
                    </Lowered>
                  </Columns>
                  <Columns $cols="37px 53px 19px 33px 52px 1fr" $top={17} $shift={-2}>
                    <MaxField id="Thmax" />
                    <MaxField id="Tvmax" pad={5} />
                  </Columns>
                  <ButtonRow $gap={8} $top={11} $inset={2}>
                    {["计算极值", "极值选型", "设计吊盖", "溜尾吊耳"].map((t) => (
                      <PushButton key={t} type="button" disabled $width={79} $height={20}>{t}</PushButton>
                    ))}
                  </ButtonRow>
                </Extremes>

                <Group $height={77} $top={8}>
                  <FieldGrid $cols="78px 83px 35px 71px 84px 1fr" $rows="34px 21px" $pad="9px 0 0 5px">
                    <ResultField id="wd" name="设计重量" code="Wd" value="5.00" unit="吨" />
                    <span /><span /><span />
                    <ResultField id="f" name="顶部载荷" code="F" value="3.00" unit="吨" />
                    <ResultField id="t" name="尾部载荷" code="T" value="2.00" unit="吨" end center pad={3} />
                  </FieldGrid>
                </Group>

                <ButtonRow $gap={17} $top={7} $inset={13}>
                  <SplitTitle>载荷分力</SplitTitle>
                  <PushButton type="button" $width={88} $height={30}>尾部吊车选型</PushButton>
                  <PushButton type="button" $width={92} $height={30}>顶部吊车选型</PushButton>
                </ButtonRow>

                <Group $height={106} $top={6}>
                  <FieldGrid $cols="79px 82px 34px 73px 80px 1fr" $rows="45px 21px" $pad="18px 0 0 2px">
                    <ResultField id="fh" name="顶部水平" code="Fh" value="3.00" unit="吨" center />
                    <ResultField id="fv" name="顶部垂直" code="Fv" value="0.00" unit="吨" end center />
                    <ResultField id="th" name="底部水平" code="Th" value="2.00" unit="吨" center />
                    <ResultField id="tv" name="底部垂直" code="Tv" value="0.00" unit="吨" end center />
                  </FieldGrid>
                </Group>

                <ButtonRow $gap={7} $top={5} $inset={4}>
                  <PushButton type="button" $width={62} $height={23}>打开</PushButton>
                  <PushButton type="button" $width={62} $height={23}>保存</PushButton>
                </ButtonRow>
              </FormPanel>

              <Stage>
                <Canvas><Diagram /></Canvas>
                <Message>计算完成</Message>
              </Stage>
            </Page>
          </TabFrame>
        </Main>
      </Body>

      <StatusBar>
        <span>提示：双击标题，关闭子窗体</span>
        <button aria-label="更多"><Arrow down /></button>
        <Icon name="toggle" size={20} />
        <Link href="#site">吊装助理</Link>
      </StatusBar>
    </Window>
  );
}
